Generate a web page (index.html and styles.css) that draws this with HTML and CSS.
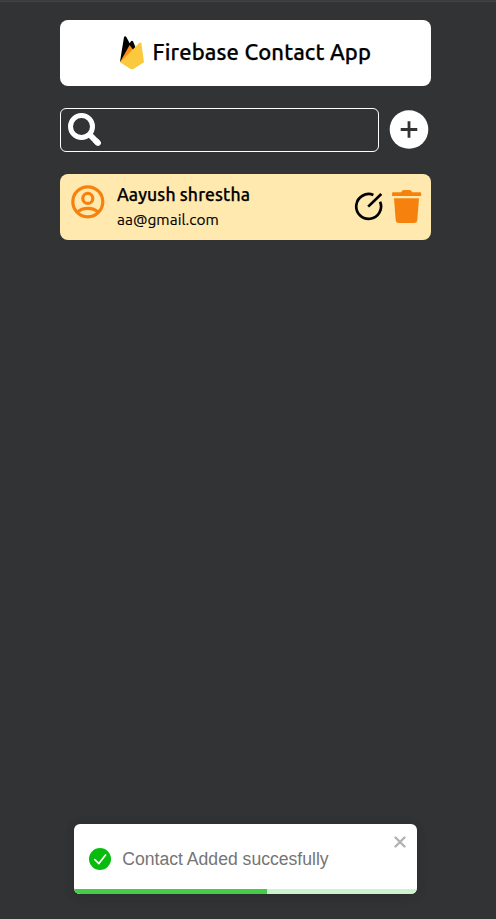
FILE: index.html
```html
<!DOCTYPE html>
<html lang="en">
<head>
<meta charset="utf-8">
<title>Firebase Contact App</title>
<link rel="stylesheet" href="styles.css">
</head>
<body>
<main class="app">
  <header class="navbar">
    <svg class="logo" width="24" height="34" viewBox="0 0 72 102">
      <path d="M0 77L12 3Q15-1 19 3L29 22L33 16Q36 12 39 16L47 35L20 70Z" fill="#000"/>
      <path d="M0 78L29 27L42 45L30 70Z" fill="#ff8a12"/>
      <path d="M0 79L57 22Q62 17 64 22L72 79L40 99Q36 101 32 99Z" fill="#fbc93d"/>
    </svg>
    <h1 class="title">Firebase Contact App</h1>
  </header>
  <div class="toolbar">
    <label class="search">
      <svg width="34" height="34" viewBox="0 0 34 34" fill="none" stroke="#fff">
        <circle cx="13.5" cy="13.5" r="11" stroke-width="5"/>
        <path d="M22.5 22.5L30.2 30.2" stroke-width="5.8" stroke-linecap="butt"/>
        <path d="M28 28L30 30" stroke-width="5.8" stroke-linecap="round"/>
      </svg>
      <input class="search-input" type="text" aria-label="Search">
    </label>
    <svg class="add" width="40" height="40" viewBox="0 0 40 40">
      <circle cx="20" cy="19.5" r="19.3" fill="#fff"/>
      <path d="M11.7 19.5H28.3M20 11.2V27.8" stroke="#323335" stroke-width="2.8"/>
    </svg>
  </div>
  <article class="card">
    <svg class="avatar" width="34" height="34" viewBox="0 0 34 34" fill="none" stroke="#f6820d" stroke-width="3.2">
      <circle cx="16.8" cy="16.8" r="15"/>
      <circle cx="16.8" cy="13.4" r="5"/>
      <path d="M6.3 27.2Q10.3 23.4 16.8 23.4T27.3 27.2"/>
    </svg>
    <div class="details">
      <h2 class="name">Aayush shrestha</h2>
      <p class="email">aa@gmail.com</p>
    </div>
    <div class="actions">
      <svg width="30" height="30" viewBox="0 0 30 30" fill="none" stroke="#000" stroke-width="2.7">
        <path d="M19.4 3A12.4 12.4 0 1 0 26.1 9.7"/>
        <path d="M14.2 14.6L27.3 2"/>
      </svg>
      <svg width="30" height="34" viewBox="0 0 30 34" fill="#f6820d">
        <path d="M.9 2.2H9L10.2.7Q10.7 0 11.7 0H17.6Q18.6 0 19.1.7L20.3 2.2H28.3Q29.1 2.2 29.1 3V6H.1V3Q.1 2.2.9 2.2Z"/>
        <path d="M2 8.2H27L25.3 30Q25.1 33 22.1 33H6.9Q3.9 33 3.7 30Z"/>
      </svg>
    </div>
  </article>
</main>
<aside class="toast" role="alert">
  <svg class="check" width="22" height="22" viewBox="0 0 22 22">
    <circle cx="11" cy="11" r="11" fill="#07bc0c"/>
    <path d="M5.8 11.7L9.9 15.6L16.5 6.9" fill="none" stroke="#fff" stroke-width="1.7" stroke-linecap="round" stroke-linejoin="round"/>
  </svg>
  <span class="message">Contact Added succesfully</span>
  <svg class="close" width="12" height="12" viewBox="0 0 12 12">
    <path d="M1.5 1.5L10.5 10.5M10.5 1.5L1.5 10.5" stroke="#b2b2b2" stroke-width="2.4" stroke-linecap="round"/>
  </svg>
  <div class="progress"><div class="progress-value"></div></div>
</aside>
</body>
</html>
```
FILE: styles.css
```css
* { box-sizing: border-box; }
body {
  margin: 0;
  height: 919px;
  overflow: hidden;
  background: #323335;
  border-top: 1px solid #3b3c3e;
  box-shadow: inset 0 1px #424345;
  color: #000;
  font-family: Ubuntu, "Noto Sans", sans-serif;
}
svg { display: block; flex: none; }
.app { width: 371px; margin: 19px 0 0 60px; }
.navbar {
  height: 66px;
  display: flex;
  align-items: center;
  padding-left: 60px;
  gap: 8.6px;
  background: #fff;
  border-radius: 8px;
}
.logo { margin-bottom: 1px; }
.title {
  margin: 0 0 2px;
  font-size: 22px;
  line-height: 30px;
  font-weight: 500;
  letter-spacing: .14px;
  white-space: nowrap;
  -webkit-text-stroke: .25px #000;
}
.toolbar { display: flex; align-items: center; margin-top: 22px; gap: 10px; }
.search {
  width: 319px;
  height: 44px;
  display: flex;
  align-items: center;
  padding-left: 7px;
  border: 1px solid #fff;
  border-radius: 6px;
}
.search-input {
  flex: 1;
  min-width: 0;
  height: 40px;
  border: 0;
  outline: 0;
  background: transparent;
  color: #fff;
}
.card {
  height: 66px;
  display: flex;
  margin-top: 22px;
  padding: 11px 9px 0 11px;
  background: #ffe9ae;
  border-radius: 8px;
}
.details { margin: -2px 0 0 12px; white-space: nowrap; }
.name { margin: 0; font-size: 17.6px; line-height: 24px; font-weight: 500; letter-spacing: .1px; -webkit-text-stroke: .25px #000; }
.email { margin: 0; font-size: 15.4px; line-height: 26px; letter-spacing: .04px; -webkit-text-stroke: .15px #000; }
.actions { display: flex; align-items: center; height: 43px; margin-left: auto; gap: 8px; }
.toast {
  position: absolute;
  left: 74px;
  top: 824px;
  width: 343px;
  height: 70px;
  display: flex;
  align-items: center;
  padding: 0 11px 0 15px;
  overflow: hidden;
  background: #fff;
  border-radius: 6px;
  box-shadow: 0 1px 10px rgba(0, 0, 0, .1), 0 2px 15px rgba(0, 0, 0, .05);
  color: #757575;
  font: 17.6px "Liberation Sans", sans-serif;
}
.message { margin-left: 11.3px; white-space: nowrap; }
.close { margin: 0 0 34px auto; }
.progress { position: absolute; left: 0; right: 0; bottom: 0; height: 5px; background: #cdf2ce; }
.progress-value { width: 193px; height: 5px; background: #45cd49; }
```
